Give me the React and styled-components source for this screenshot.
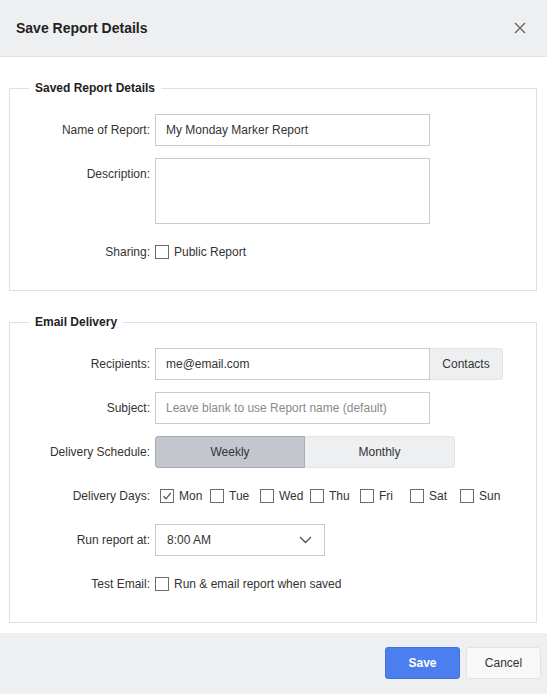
import React from 'react'
import styled, { createGlobalStyle } from 'styled-components'

const Global = createGlobalStyle`
  body {
    margin: 0;
    background: #fff;
    font-family: "Liberation Sans", Arial, sans-serif;
    font-size: 12px;
    color: #333;
  }
`

const Modal = styled.div`
  width: 547px;
  height: 694px;
  display: flex;
  flex-direction: column;
  background: #fff;
`

const Header = styled.header`
  height: 56px;
  flex: none;
  display: flex;
  align-items: center;
  justify-content: space-between;
  padding: 0 19px 0 16px;
  background: #eeeff1;
  border-bottom: 1px solid #e2e3e6;
`

const Title = styled.h1`
  margin: 0;
  font-size: 14px;
  font-weight: bold;
  color: #222;
`

const Close = styled.button`
  border: 0;
  background: none;
  padding: 0;
  width: 16px;
  height: 16px;
  display: flex;
  align-items: center;
  justify-content: center;
  cursor: pointer;
`

const Body = styled.div`
  flex: 1;
  padding: 24px 10px 0 9px;
  display: flex;
  flex-direction: column;
  gap: 24px;
`

const Fieldset = styled.fieldset`
  margin: 0;
  padding: 19px 0 22px;
  border: 1px solid #dfe0e3;
  min-width: 0;
`

const Legend = styled.legend`
  margin-left: 19px;
  padding: 0 6px;
  font-size: 12px;
  line-height: 14px;
  font-weight: bold;
  color: #222;
`

const Rows = styled.div`
  display: flex;
  flex-direction: column;
  gap: 12px;
`

const Row = styled.div`
  display: grid;
  grid-template-columns: 140px 1fr;
  column-gap: 5px;
  align-items: ${p => (p.$top ? 'start' : 'center')};
  min-height: 32px;
`

const Label = styled.label`
  text-align: right;
  color: #333;
  padding-top: ${p => (p.$top ? '9px' : '0')};
`

const Field = styled.div`
  display: flex;
  align-items: center;
`

const Input = styled.input`
  box-sizing: border-box;
  width: ${p => p.$w || 275}px;
  height: 32px;
  border: 1px solid #c8c9d4;
  padding: 0 10px;
  font: inherit;
  color: #333;
  outline: none;
  &::placeholder {
    color: #8a8a8a;
  }
`

const TextArea = styled.textarea`
  box-sizing: border-box;
  width: 275px;
  height: 66px;
  border: 1px solid #c8c9d4;
  resize: none;
  font: inherit;
  outline: none;
`

const SideButton = styled.button`
  box-sizing: border-box;
  width: 73px;
  height: 32px;
  border: 1px solid #e3e4e7;
  border-left: 0;
  border-radius: 0 3px 3px 0;
  background: #eeeff1;
  font: inherit;
  color: #333;
`

const Toggle = styled.button`
  box-sizing: border-box;
  width: 150px;
  height: 32px;
  font: inherit;
  color: #333;
  background: ${p => (p.$active ? '#c4c6cd' : '#eeeff1')};
  border: 1px solid ${p => (p.$active ? '#a9abb3' : '#e3e4e7')};
  border-radius: ${p => (p.$first ? '3px 0 0 3px' : '0 3px 3px 0')};
  ${p => !p.$first && 'border-left: 0;'}
`

const Check = styled.label`
  display: inline-flex;
  align-items: center;
  gap: 5px;
  color: #333;
  width: ${p => (p.$w ? `${p.$w}px` : 'auto')};
`

const Box = styled.span`
  box-sizing: border-box;
  width: 14px;
  height: 14px;
  border: 1px solid #6b6b6b;
  display: inline-flex;
  align-items: center;
  justify-content: center;
  background: #fff;
`

const Days = styled.div`
  display: flex;
  padding-left: 5px;
`

const Select = styled.div`
  box-sizing: border-box;
  width: 170px;
  height: 32px;
  border: 1px solid #c8c9d4;
  padding: 0 12px 0 11px;
  display: flex;
  align-items: center;
  justify-content: space-between;
  color: #333;
`

const Footer = styled.footer`
  height: 61px;
  flex: none;
  background: #eeeff1;
  display: flex;
  justify-content: flex-end;
  align-items: flex-start;
  gap: 6px;
  padding: 14px 6px 0 0;
  box-sizing: border-box;
`

const Button = styled.button`
  box-sizing: border-box;
  width: 75px;
  height: 32px;
  border-radius: 3px;
  font: inherit;
  font-weight: ${p => (p.$primary ? 'bold' : 'normal')};
  color: ${p => (p.$primary ? '#fff' : '#333')};
  background: ${p => (p.$primary ? '#4b7ff0' : '#f8f8f9')};
  border: 1px solid ${p => (p.$primary ? '#4272e0' : '#e2e3e6')};
`

const CheckBox = ({ checked, label, w }) => (
  <Check $w={w}>
    <Box>
      {checked && (
        <svg width="10" height="10" viewBox="0 0 10 10">
          <path d="M1.5 5.2 L4 7.8 L8.8 1.8" fill="none" stroke="#555" strokeWidth="1.3" />
        </svg>
      )}
    </Box>
    {label}
  </Check>
)

const days = ['Mon', 'Tue', 'Wed', 'Thu', 'Fri', 'Sat', 'Sun']

export default function App() {
  return (
    <Modal>
      <Global />
      <Header>
        <Title>Save Report Details</Title>
        <Close aria-label="Close">
          <svg width="12" height="12" viewBox="0 0 12 12">
            <path d="M1 1 L11 11 M11 1 L1 11" stroke="#666" strokeWidth="1.4" />
          </svg>
        </Close>
      </Header>
      <Body>
        <Fieldset>
          <Legend>Saved Report Details</Legend>
          <Rows>
            <Row>
              <Label>Name of Report:</Label>
              <Field>
                <Input defaultValue="My Monday Marker Report" />
              </Field>
            </Row>
            <Row $top>
              <Label $top>Description:</Label>
              <Field>
                <TextArea />
              </Field>
            </Row>
            <Row>
              <Label>Sharing:</Label>
              <Field>
                <CheckBox label="Public Report" />
              </Field>
            </Row>
          </Rows>
        </Fieldset>
        <Fieldset>
          <Legend>Email Delivery</Legend>
          <Rows>
            <Row>
              <Label>Recipients:</Label>
              <Field>
                <Input defaultValue="me@email.com" />
                <SideButton>Contacts</SideButton>
              </Field>
            </Row>
            <Row>
              <Label>Subject:</Label>
              <Field>
                <Input placeholder="Leave blank to use Report name (default)" />
              </Field>
            </Row>
            <Row>
              <Label>Delivery Schedule:</Label>
              <Field>
                <Toggle $active $first>Weekly</Toggle>
                <Toggle>Monthly</Toggle>
              </Field>
            </Row>
            <Row>
              <Label>Delivery Days:</Label>
              <Days>
                {days.map((d, i) => (
                  <CheckBox key={d} label={d} checked={i === 0} w={50} />
                ))}
              </Days>
            </Row>
            <Row>
              <Label>Run report at:</Label>
              <Field>
                <Select>
                  <span>8:00 AM</span>
                  <svg width="13" height="8" viewBox="0 0 13 8">
                    <path d="M1 1 L6.5 6.5 L12 1" fill="none" stroke="#555" strokeWidth="1.4" />
                  </svg>
                </Select>
              </Field>
            </Row>
            <Row>
              <Label>Test Email:</Label>
              <Field>
                <CheckBox label="Run & email report when saved" />
              </Field>
            </Row>
          </Rows>
        </Fieldset>
      </Body>
      <Footer>
        <Button $primary>Save</Button>
        <Button>Cancel</Button>
      </Footer>
    </Modal>
  )
}
